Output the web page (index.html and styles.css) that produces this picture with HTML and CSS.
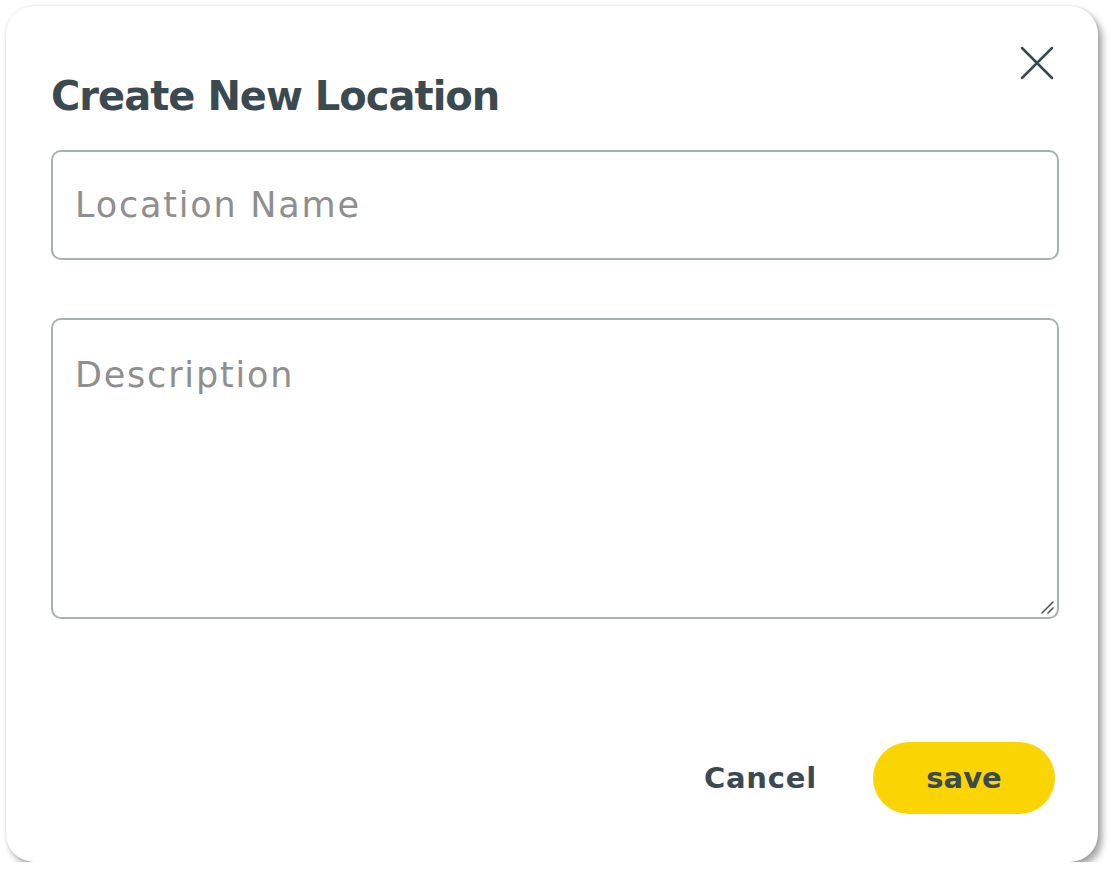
FILE: index.html
```html
<!DOCTYPE html>
<html>
<head>
<meta charset="utf-8">
<link rel="stylesheet" href="styles.css">
</head>
<body>
<div class="dialog">
  <button class="close" aria-label="Close">
    <svg width="34" height="34" viewBox="0 0 34 34"><path d="M2 2 L32 32 M32 2 L2 32" stroke="#3b4a50" stroke-width="2.5" stroke-linecap="round" fill="none"/></svg>
  </button>
  <h1 class="title">Create New Location</h1>
  <div class="field name">Location Name</div>
  <div class="field desc">Description
    <svg class="grip" width="16" height="16" viewBox="0 0 16 16"><path d="M3 14 L14 3 M9 14 L14 9" stroke="#555" stroke-width="1.6" stroke-linecap="round"/></svg>
  </div>
  <div class="footer">
    <button class="cancel">Cancel</button>
    <button class="save">save</button>
  </div>
</div>
</body>
</html>
```
FILE: styles.css
```css
html, body { margin: 0; padding: 0; background: #fff; }
body { font-family: "DejaVu Sans", "Inter", sans-serif; }
.dialog {
  position: relative;
  box-sizing: border-box;
  margin: 6px 0 0 6px;
  width: 1092px;
  height: 856px;
  background: #fff;
  border-radius: 28px;
  box-shadow: 4px 5px 7px rgba(0,0,0,0.36), 0 0 3px rgba(0,0,0,0.12);
  padding: 0 39px 0 45px;
  display: flex;
  flex-direction: column;
}
.close {
  position: absolute;
  top: 40px;
  right: 44px;
  background: none;
  border: 0;
  padding: 0;
  width: 34px;
  height: 34px;
  cursor: pointer;
}
.close svg { display: block; }
.title {
  margin: 64px 0 0 0;
  font-size: 40px;
  line-height: 52px;
  font-weight: 700;
  color: #3b4a50;
  letter-spacing: -1px;
}
.field {
  box-sizing: border-box;
  border: 2px solid #a8b0b4;
  border-radius: 10px;
  color: #8f8f8f;
  font-size: 35px;
  letter-spacing: 1.8px;
  padding: 0 22px;
}
.name {
  margin-top: 28px;
  height: 110px;
  line-height: 106px;
}
.desc {
  position: relative;
  margin-top: 58px;
  height: 301px;
  padding-top: 30px;
  line-height: 50px;
}
.grip { position: absolute; right: 2px; bottom: 2px; }
.footer {
  margin-top: 123px;
  display: flex;
  justify-content: flex-end;
  align-items: center;
  gap: 56px;
  padding-right: 4px;
}
.footer button {
  font-family: inherit;
  font-weight: 700;
  font-size: 29px;
  color: #3b4a50;
  border: 0;
  cursor: pointer;
}
.cancel { background: none; padding: 0; letter-spacing: 0.8px; }
.save {
  background: #fad503;
  width: 182px;
  height: 72px;
  border-radius: 36px;
  letter-spacing: 0;
}
```
